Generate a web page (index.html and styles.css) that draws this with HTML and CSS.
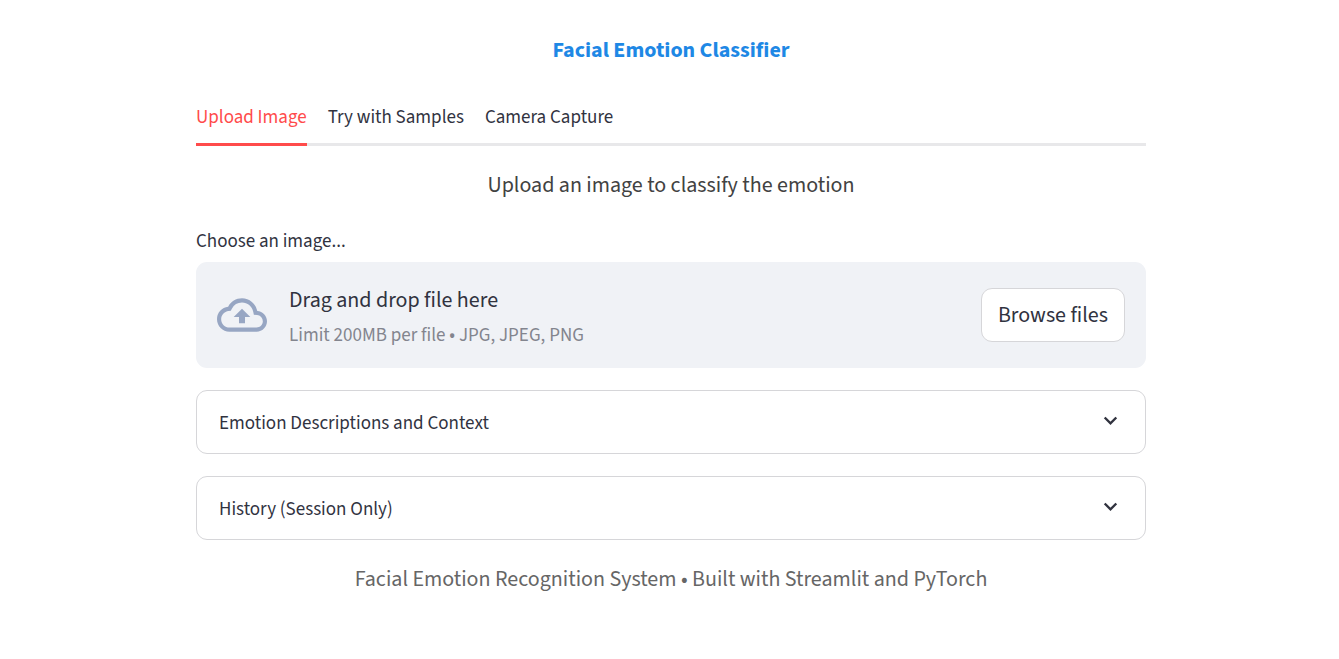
FILE: index.html
```html
<!DOCTYPE html>
<html lang="en">
<head>
<meta charset="utf-8">
<meta name="viewport" content="width=device-width, initial-scale=1">
<title>Facial Emotion Classifier</title>
<link rel="stylesheet" href="styles.css">
</head>
<body>
<main class="page">
  <h1 class="title">Facial Emotion Classifier</h1>
  <div class="tabs" role="tablist">
    <button class="tab tab-active" role="tab" aria-selected="true">Upload Image</button>
    <button class="tab" role="tab" aria-selected="false">Try with Samples</button>
    <button class="tab" role="tab" aria-selected="false">Camera Capture</button>
  </div>
  <p class="intro">Upload an image to classify the emotion</p>
  <p class="field-label" id="upload-label">Choose an image...</p>
  <section class="dropzone" aria-labelledby="upload-label">
    <svg class="cloud" viewBox="0 0 24 24" aria-hidden="true"><path d="M19.35 10.04A7.49 7.49 0 0 0 12 4C9.11 4 6.6 5.64 5.35 8.04A5.994 5.994 0 0 0 0 14c0 3.31 2.69 6 6 6h13c2.76 0 5-2.24 5-5 0-2.64-2.05-4.78-4.65-4.96zM19 18H6c-2.21 0-4-1.79-4-4 0-2.05 1.53-3.76 3.56-3.97l1.07-.11.5-.95A5.469 5.469 0 0 1 12 6c2.62 0 4.88 1.86 5.39 4.43l.3 1.5 1.53.11A2.98 2.98 0 0 1 22 15c0 1.65-1.35 3-3 3zM8 13h2.55v3h2.9v-3H16l-4-4z"/></svg>
    <div class="drop-text">
      <span class="drop-title">Drag and drop file here</span>
      <span class="drop-limit">Limit 200MB per file • JPG, JPEG, PNG</span>
    </div>
    <button class="browse">Browse files</button>
  </section>
  <button class="expander" aria-expanded="false">
    <span>Emotion Descriptions and Context</span>
    <svg class="chevron" viewBox="0 0 24 24" aria-hidden="true"><path d="M5.700 8.500L11.500 14.300l5.800-5.800"/></svg>
  </button>
  <button class="expander" aria-expanded="false">
    <span>History (Session Only)</span>
    <svg class="chevron" viewBox="0 0 24 24" aria-hidden="true"><path d="M5.700 8.500L11.500 14.300l5.800-5.800"/></svg>
  </button>
  <footer class="footer">Facial Emotion Recognition System • Built with Streamlit and PyTorch</footer>
</main>
</body>
</html>
```

FILE: styles.css
```css
* { box-sizing: border-box; }
body {
  margin: 0;
  background: #fff;
  color: #31333f;
  font-family: "Source Sans Pro", "Source Sans 3", "Noto Sans CJK SC", "Noto Sans", sans-serif;
  font-size: 19px;
  line-height: 30px;
}
button { font: inherit; color: inherit; cursor: pointer; }
.page {
  max-width: 995px;
  margin: 0 auto;
  padding: 33px 21px 32px 24px;
}
.title {
  margin: 0 0 37px;
  text-align: center;
  color: #1e88e5;
  font-size: 22px;
  line-height: 34px;
  font-weight: 700;
}
.tabs {
  display: flex;
  gap: 21px;
  height: 42px;
  margin-bottom: 22px;
  box-shadow: inset 0 -3px #e8e8ea;
}
.tab {
  padding: 0 0 12px;
  border: 0;
  border-bottom: 3px solid transparent;
  background: none;
  line-height: 27px;
}
.tab-active { color: #ff4b4b; border-color: #ff4b4b; }
.intro {
  margin: 0 0 25px;
  text-align: center;
  color: #424242;
  font-size: 22px;
  line-height: 34px;
}
.field-label { margin: 0 0 5px; }
.dropzone {
  display: flex;
  align-items: center;
  padding: 17px 21px;
  margin-bottom: 22px;
  border-radius: 11px;
  background: #f0f2f6;
}
.cloud { width: 50px; height: 50px; margin-right: 22px; fill: #97a6c3; }
.drop-text {
  display: flex;
  flex-direction: column;
  flex: 1;
  gap: 5px;
  padding-top: 5px;
}
.drop-title { font-size: 22px; line-height: 32px; }
.drop-limit { color: #83858e; }
.browse {
  height: 54px;
  padding: 0 16px;
  border: 1px solid #d6d6d9;
  border-radius: 11px;
  background: #fff;
  font-size: 22px;
}
.expander {
  display: flex;
  width: 100%;
  align-items: flex-start;
  justify-content: space-between;
  padding: 18px 22px 14px;
  margin-bottom: 22px;
  border: 1px solid #d6d6d9;
  border-radius: 11px;
  background: none;
  text-align: left;
}
.chevron { width: 24px; height: 24px; fill: none; stroke: #31333f; stroke-width: 2.400; }
.footer { color: #666; font-size: 22px; line-height: 34px; text-align: center; }
```
